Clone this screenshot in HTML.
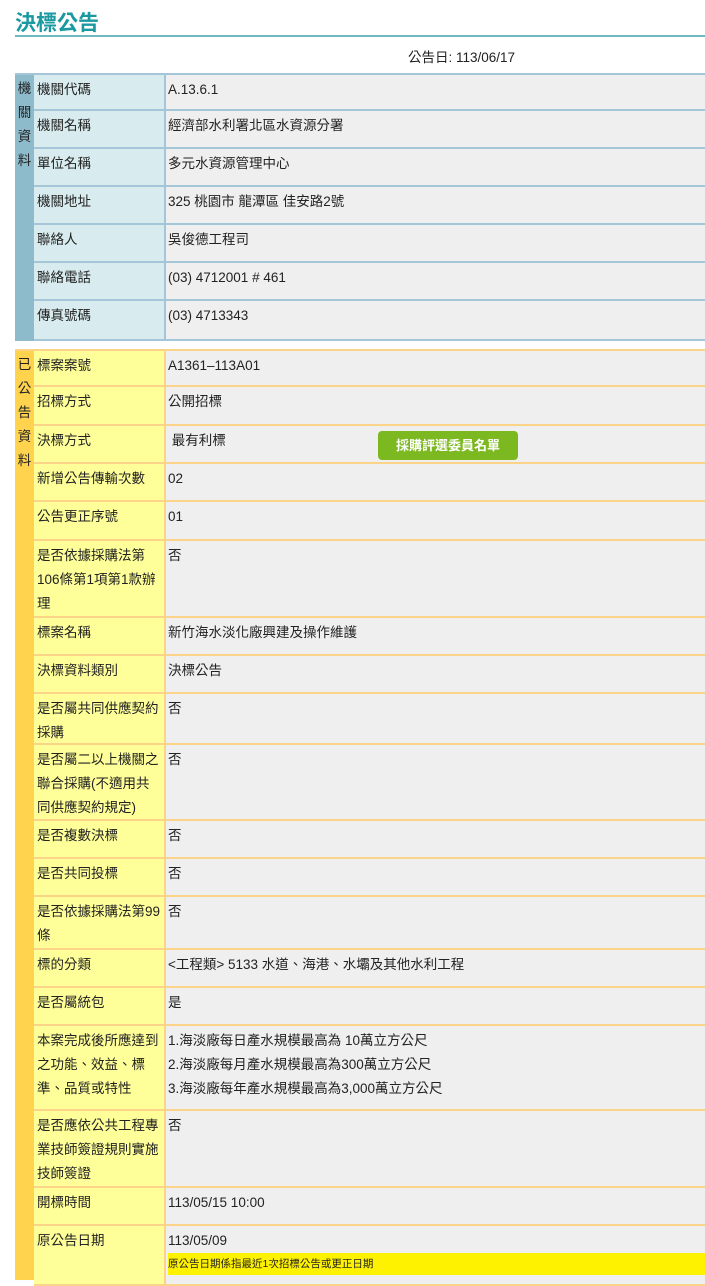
<!DOCTYPE html>
<html><head><meta charset="utf-8"><style>
body{margin:0;width:705px;height:1280px;overflow:hidden;background:#fff;font-family:"Liberation Sans","Noto Sans CJK TC",sans-serif;font-size:13.5px;color:#222;position:relative}
.t{position:absolute;left:15px;top:7px;font-size:21px;font-weight:bold;color:#1a9aa0}
.hl{position:absolute;left:15px;top:35px;width:690px;height:2px;background:#6fb8bf}
.d{position:absolute;left:408px;top:46px;font-size:13.5px}
.side{position:absolute;left:15px;width:19px;text-align:center;line-height:24px;padding-top:2px;box-sizing:border-box;font-size:13.5px}
.r{position:absolute;left:34px;width:671px;box-sizing:border-box}
.l{position:absolute;left:0;top:0;bottom:0;width:132px;padding:3px 3px;box-sizing:border-box;line-height:24px}
.v{position:absolute;left:132px;right:0;top:0;bottom:0;padding:3px 2px;box-sizing:border-box;line-height:24px;background:#efefef}
.b .r{border-bottom:2px solid #a4c6d8}.b .l{background:#d8ecef;border-right:2px solid #a4c6d8}
.y .r{border-bottom:2px solid #fbd48a}.y .l{background:#ffff99;border-right:2px solid #fbd48a}
.btn{position:absolute;left:212px;top:5px;width:140px;height:29px;background:#7cb81f;border-radius:4px;color:#fff;font-weight:bold;text-align:center;line-height:29px;font-size:13px}
.note{position:absolute;left:2px;right:0;top:27px;height:22px;background:#fff200;font-size:10.5px;line-height:22px}
</style></head><body>
<div class="t">決標公告</div><div class="hl"></div>
<div class="d">公告日: 113/06/17</div>
<div class="b">
<div class="side" style="top:73px;height:268px;background:#8dbbcb;border-top:2px solid #a4c6d8">機<br>關<br>資<br>料</div>
<div class="r" style="top:73px;height:38px;border-top:2px solid #a4c6d8"><div class="l">機關代碼</div><div class="v">A.13.6.1</div></div>
<div class="r" style="top:111px;height:38px"><div class="l">機關名稱</div><div class="v">經濟部水利署北區水資源分署</div></div>
<div class="r" style="top:149px;height:38px"><div class="l">單位名稱</div><div class="v">多元水資源管理中心</div></div>
<div class="r" style="top:187px;height:38px"><div class="l">機關地址</div><div class="v">325 桃園市 龍潭區 佳安路2號</div></div>
<div class="r" style="top:225px;height:38px"><div class="l">聯絡人</div><div class="v">吳俊德工程司</div></div>
<div class="r" style="top:263px;height:38px"><div class="l">聯絡電話</div><div class="v">(03) 4712001 # 461</div></div>
<div class="r" style="top:301px;height:40px"><div class="l">傳真號碼</div><div class="v">(03) 4713343</div></div>
</div>
<div class="y">
<div class="side" style="top:349px;height:931px;background:#ffd34e;border-top:2px solid #fbd48a">已<br>公<br>告<br>資<br>料</div>
<div class="r" style="top:349px;height:38px;border-top:2px solid #fbd48a"><div class="l">標案案號</div><div class="v">A1361–113A01</div></div>
<div class="r" style="top:387px;height:39px"><div class="l">招標方式</div><div class="v">公開招標</div></div>
<div class="r" style="top:426px;height:38px"><div class="l">決標方式</div><div class="v">&nbsp;最有利標<div class="btn">採購評選委員名單</div></div></div>
<div class="r" style="top:464px;height:38px"><div class="l">新增公告傳輸次數</div><div class="v">02</div></div>
<div class="r" style="top:502px;height:39px"><div class="l">公告更正序號</div><div class="v">01</div></div>
<div class="r" style="top:541px;height:77px"><div class="l">是否依據採購法第106條第1項第1款辦理</div><div class="v">否</div></div>
<div class="r" style="top:618px;height:38px"><div class="l">標案名稱</div><div class="v">新竹海水淡化廠興建及操作維護</div></div>
<div class="r" style="top:656px;height:38px"><div class="l">決標資料類別</div><div class="v">決標公告</div></div>
<div class="r" style="top:694px;height:51px"><div class="l">是否屬共同供應契約採購</div><div class="v">否</div></div>
<div class="r" style="top:745px;height:76px"><div class="l">是否屬二以上機關之聯合採購(不適用共同供應契約規定)</div><div class="v">否</div></div>
<div class="r" style="top:821px;height:38px"><div class="l">是否複數決標</div><div class="v">否</div></div>
<div class="r" style="top:859px;height:38px"><div class="l">是否共同投標</div><div class="v">否</div></div>
<div class="r" style="top:897px;height:53px"><div class="l">是否依據採購法第99條</div><div class="v">否</div></div>
<div class="r" style="top:950px;height:38px"><div class="l">標的分類</div><div class="v">&lt;工程類&gt; 5133 水道、海港、水壩及其他水利工程</div></div>
<div class="r" style="top:988px;height:38px"><div class="l">是否屬統包</div><div class="v">是</div></div>
<div class="r" style="top:1026px;height:85px"><div class="l">本案完成後所應達到之功能、效益、標準、品質或特性</div><div class="v">1.海淡廠每日產水規模最高為 10萬立方公尺<br>2.海淡廠每月產水規模最高為300萬立方公尺<br>3.海淡廠每年產水規模最高為3,000萬立方公尺</div></div>
<div class="r" style="top:1111px;height:77px"><div class="l">是否應依公共工程專業技師簽證規則實施技師簽證</div><div class="v">否</div></div>
<div class="r" style="top:1188px;height:38px"><div class="l">開標時間</div><div class="v">113/05/15 10:00</div></div>
<div class="r" style="top:1226px;height:60px"><div class="l">原公告日期</div><div class="v">113/05/09<div class="note">原公告日期係指最近1次招標公告或更正日期</div></div></div>
</div>
</body></html>
